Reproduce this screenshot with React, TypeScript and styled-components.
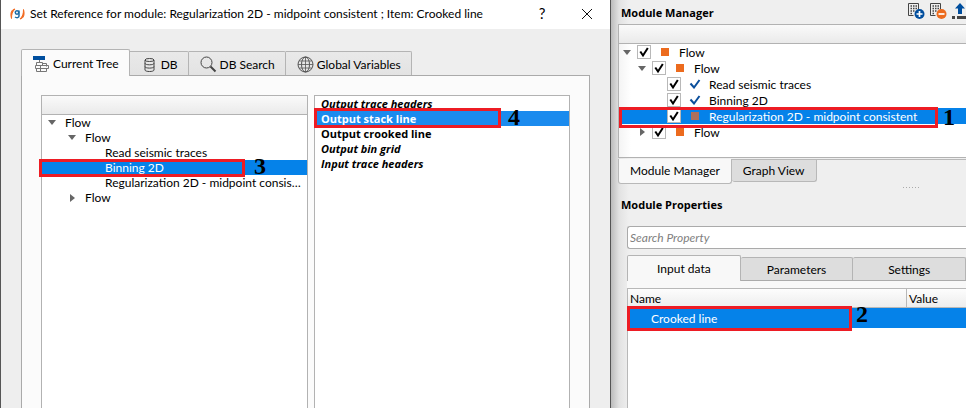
import React from "react";
import styled, { createGlobalStyle, css } from "styled-components";

const GlobalStyle = createGlobalStyle`
  *, *::before, *::after { box-sizing: border-box; }
  body {
    margin: 0;
    background: #efefef;
    color: #000;
    font: 12px/15px Lato, "Open Sans", sans-serif;
  }
  button, input { font: inherit; color: inherit; }
`;

const Screen = styled.main`
  display: grid;
  grid-template-columns: minmax(0, 611fr) minmax(0, 355fr);
  min-height: 100vh;
  overflow: hidden;
`;

/* ---------- dialog ---------- */

const Dialog = styled.section`
  display: flex;
  flex-direction: column;
  background: #eee;
  border-left: 1px solid #555;
  border-right: 1px solid #555;
`;

const TitleBar = styled.header`
  display: flex;
  align-items: center;
  height: 29px;
  padding: 0 15px 2px 9px;
  background: #fff;
`;

const Title = styled.h1`
  flex: 1;
  min-width: 0;
  margin: 0 0 0 5px;
  font-size: 12px;
  font-weight: 400;
  white-space: nowrap;
`;

const WindowButton = styled.button`
  display: flex;
  align-items: center;
  justify-content: center;
  width: 16px;
  height: 20px;
  margin-left: 29px;
  padding: 0;
  border: 0;
  background: none;
  font-size: 15px;
`;

const DialogTabs = styled.div`
  display: flex;
  align-items: flex-end;
  margin: 20px 20px 0;
  position: relative;
`;

const DialogTab = styled.button<{ $active?: boolean }>`
  display: flex;
  align-items: center;
  gap: 3px;
  height: 24px;
  padding: 2px 10px 0 11px;
  border: 1px solid #b4b4b4;
  border-left-width: 0;
  border-bottom: 0;
  border-radius: 0 2px 0 0;
  background: linear-gradient(#e9e9e9, #e3e3e3);
  white-space: nowrap;
  ${(p) =>
    p.$active &&
    css`
      height: 27px;
      margin-bottom: -1px;
      padding: 1px 10px 0 11px;
      border-left-width: 1px;
      border-radius: 2px 2px 0 0;
      background: #fbfbfb;
    `}
`;

const DialogPane = styled.div`
  flex: 1;
  display: grid;
  grid-template-columns: minmax(0, 267fr) minmax(0, 256fr);
  gap: 6px;
  margin: 0 20px;
  padding: 19px 19px 0;
  border: 1px solid #aaa;
  border-bottom: 0;
  background: #fbfbfb;
`;

const Box = styled.div`
  min-width: 0;
  border: 1px solid #b2b2b2;
  border-bottom: 0;
  background: #fff;
`;

const HeaderStrip = styled.div`
  height: 19px;
  border-bottom: 1px solid #b2b2b2;
  background: linear-gradient(#fafafa, #eaeaea);
`;

const Tree = styled.ul`
  margin: 0;
  padding: 0;
  list-style: none;
`;

const TreeRow = styled.li<{ $level: number; $selected?: boolean }>`
  position: relative;
  display: flex;
  align-items: center;
  gap: 9px;
  height: 15px;
  padding: 0 4px 0 ${(p) => 6 + p.$level * 20}px;
  white-space: nowrap;
  ${(p) => p.$selected && css`background: #0582e9; color: #fff;`}
`;

const Ellipsis = styled.span`
  min-width: 0;
  overflow: hidden;
  text-overflow: ellipsis;
`;

const ArrowSlot = styled.span`
  display: flex;
  flex: none;
  justify-content: center;
  width: 8px;
`;

const OutputRow = styled.li<{ $italic?: boolean; $selected?: boolean }>`
  position: relative;
  height: 15px;
  padding-left: 6px;
  font-family: "Open Sans", sans-serif;
  font-size: 11px;
  font-weight: 700;
  font-style: ${(p) => (p.$italic ? "italic" : "normal")};
  white-space: nowrap;
  ${(p) => p.$selected && css`background: #1b8bee; color: #fff;`}
`;

/* ---------- callouts drawn over rows ---------- */

const Frame = styled.span<{ $left: number; $width: number; $top?: number; $bottom?: number }>`
  position: absolute;
  z-index: 2;
  left: ${(p) => p.$left}px;
  top: ${(p) => p.$top ?? -1}px;
  bottom: ${(p) => p.$bottom ?? -2}px;
  width: ${(p) => p.$width}px;
  border: 3px solid #ed1c24;
  pointer-events: none;
`;

const Mark = styled.span<{ $left: number; $top?: number }>`
  position: absolute;
  z-index: 3;
  left: ${(p) => p.$left}px;
  top: ${(p) => p.$top ?? -7}px;
  color: #000;
  font: 700 24px/27px "Liberation Serif", serif;
`;

/* ---------- side panel ---------- */

const Side = styled.section`
  display: flex;
  flex-direction: column;
  min-width: 0;
  padding-left: 7px;
  background: linear-gradient(90deg, #bcbcbc, #e2e2e2 8px, #efefef 18px);
`;

const SideHeader = styled.header`
  display: flex;
  align-items: center;
  justify-content: space-between;
  height: 24px;
  padding-left: 3px;
`;

const SideTitle = styled.h2`
  margin: 0;
  font-family: "Open Sans", sans-serif;
  font-size: 11px;
  font-weight: 700;
`;

const Tools = styled.div`
  display: flex;
  gap: 4px;
  margin-right: -4px;
  padding-bottom: 2px;
`;

const ToolButton = styled.button`
  display: flex;
  width: 18px;
  padding: 0;
  border: 0;
  background: none;
`;

const ModuleBox = styled.div`
  height: 134px;
  border: 1px solid #b2b2b2;
  border-right: 0;
  background: linear-gradient(90deg, #f4f4f4, #fff 12px);
`;

const ModuleRow = styled.li<{ $level: number; $selected?: boolean }>`
  position: relative;
  display: flex;
  align-items: center;
  height: 16px;
  padding-left: ${(p) => 4 + p.$level * 15}px;
  white-space: nowrap;
  ${(p) => p.$selected && css`background: #0582e9; color: #fff;`}
`;

const ModuleLabel = styled.label`
  display: flex;
  align-items: center;
  margin-left: 6px;
`;

const tick = encodeURIComponent(
  '<svg xmlns="http://www.w3.org/2000/svg" viewBox="0 0 12 12"><path d="M2.3 5.5 5 9.5 9.8 2" fill="none" stroke="black" stroke-width="2"/></svg>'
);

const Check = styled.input`
  appearance: none;
  width: 14px;
  height: 14px;
  margin: 0;
  border: 1px solid #b8b8b8;
  background: #fff;
  &:checked { background: #fff url("data:image/svg+xml,${tick}") center / 12px 12px no-repeat; }
`;

const Status = styled.span`
  display: flex;
  justify-content: center;
  width: 12px;
  margin: 0 8px;
`;

const Square = styled.span<{ $dim?: boolean }>`
  width: 8px;
  height: 8px;
  background: ${(p) => (p.$dim ? "#ad705b" : "#ec6b1e")};
`;

const BottomTabs = styled.div`
  display: flex;
  align-items: flex-start;
  margin-top: 1px;
  border-top: 1px solid #b8b8b8;
`;

const BottomTab = styled.button<{ $active?: boolean }>`
  height: ${(p) => (p.$active ? 25 : 22)}px;
  padding: 0 11px 1px;
  border: 1px solid #b8b8b8;
  border-top: 0;
  border-left-width: ${(p) => (p.$active ? 1 : 0)}px;
  border-radius: 0 0 3px 3px;
  background: ${(p) => (p.$active ? "#f8f8f8" : "#ddd")};
  margin-top: ${(p) => (p.$active ? -1 : 0)}px;
  white-space: nowrap;
`;

const Grip = styled.div`
  width: 17px;
  height: 1px;
  margin: 3px 0 0 285px;
  background: repeating-linear-gradient(90deg, #aaa 0 1px, transparent 1px 3px);
`;

const Properties = styled.div`
  display: flex;
  flex: 1;
  flex-direction: column;
  padding: 9px 0 0 9px;
`;

const PropertiesTitle = styled(SideTitle)`
  margin-left: -6px;
`;

const Search = styled.input`
  width: 100%;
  height: 23px;
  margin-top: 14px;
  padding: 0 2px;
  border: 1px solid #aaa;
  border-right: 0;
  border-radius: 3px 0 0 3px;
  background: #fff;
  &::placeholder { color: #808080; font-style: italic; opacity: 1; }
`;

const PropertyTabs = styled.div`
  display: flex;
  align-items: flex-end;
  margin-top: 6px;
  border-bottom: 1px solid #aaa;
`;

const PropertyTab = styled.button<{ $active?: boolean }>`
  flex: 1;
  height: ${(p) => (p.$active ? 26 : 23)}px;
  margin-bottom: ${(p) => (p.$active ? -1 : 0)}px;
  padding: 0;
  border: 1px solid #b4b4b4;
  border-bottom: 0;
  border-left-width: ${(p) => (p.$active ? 1 : 0)}px;
  border-radius: 2px 2px 0 0;
  background: ${(p) => (p.$active ? "#f8f8f8" : "#ddd")};
`;

const TableBox = styled.div`
  flex: 1;
  padding-top: 7px;
  background: linear-gradient(#f8f8f8 0 7px, #fff 7px);
`;

const Table = styled.table`
  width: 100%;
  border-collapse: separate;
  border-spacing: 0;
  table-layout: fixed;
`;

const Head = styled.th`
  height: 20px;
  padding: 0 2px;
  border: solid #b8b8b8;
  border-width: 1px 0 1px 1px;
  background: linear-gradient(#fdfdfd, #ededed);
  font-weight: 400;
  text-align: left;
  &:first-child { width: 279px; }
`;

const Cell = styled.td`
  position: relative;
  height: 20px;
  padding: 0 0 0 23px;
  border-left: 1px solid #b8b8b8;
  background: #0582e9;
  color: #fff;
  & + & { border-left: 0; }
`;

const EmptyArea = styled.div`
  height: calc(100% - 40px);
  border-left: 1px solid #b8b8b8;
`;

/* ---------- drawings ---------- */

const Arrow = ({ open }: { open?: boolean }) => (
  <ArrowSlot>
    {open ? (
      <svg width="8" height="5" viewBox="0 0 8 5"><path d="M0 0h8L4 5z" fill="#666" /></svg>
    ) : (
      <svg width="5" height="8" viewBox="0 0 5 8"><path d="M0 0v8l5-4z" fill="#666" /></svg>
    )}
  </ArrowSlot>
);

const Logo = () => (
  <svg width="15" height="12" viewBox="0 0 15 12" fill="none">
    <path d="M5 1C1.500 1.500 0 5 1.500 10.500 1.500 6.500 2.200 3.500 5 1Z" fill="#f26a21" stroke="#f26a21" />
    <path d="M10 11c3.500-.5 5-4 3.500-9.500 0 4-.7 7-3.500 9.500Z" fill="#f26a21" stroke="#f26a21" />
    <circle cx="7" cy="4.500" r="1.700" stroke="#1c6ba5" strokeWidth="1.500" />
    <path d="M9 2.500v5.500c0 2-2.500 2-4 1" stroke="#1c6ba5" strokeWidth="1.500" />
  </svg>
);

const TreeIcon = () => (
  <svg width="17" height="16" viewBox="0 0 17 16" fill="none" stroke="#777">
    <path d="M0 0h12v4H0z" fill="#004e9e" stroke="none" />
    <path d="M6.500 4v2M3.500 6.500h6v3h-6zM9.500 7.500h4v3M2.500 9.500h13v3h-13zM3.500 12.500v3h10v-3M7.500 9.500v6" />
  </svg>
);

const DatabaseIcon = () => (
  <svg width="17" height="16" viewBox="0 0 17 16" fill="none" stroke="#444">
    <ellipse cx="8.500" cy="3" rx="4.500" ry="1.500" />
    <path d="M4 3v10c0 2 9 2 9 0V3M4 6.300c0 2 9 2 9 0M4 9.600c0 2 9 2 9 0" />
  </svg>
);

const SearchIcon = () => (
  <svg width="17" height="17" viewBox="0 0 17 17" fill="none" stroke="#444">
    <circle cx="6.500" cy="6.500" r="5.500" />
    <path d="m10.500 10.500 5 5" strokeWidth="2" />
  </svg>
);

const GlobeIcon = () => (
  <svg width="17" height="17" viewBox="0 0 17 17" fill="none" stroke="#555">
    <circle cx="8.500" cy="8.500" r="7.500" />
    <ellipse cx="8.500" cy="8.500" rx="4" ry="7.500" />
    <path d="M2 5h13M1 8.500h15M2 12h13M8.500 1v15" strokeWidth=".8" />
  </svg>
);

const FlowIcon = ({ kind }: { kind: "add" | "remove" }) => (
  <svg width="18" height="17" viewBox="0 0 18 17" fill="none">
    <path d="M.5 12.500v-12h10v6M.5 12.500h5" stroke="#444" />
    <path d="M2.500 3h1.500m1 0h1.500m1 0h1.500M2.500 5.500h1.500m1 0h1.500m1 0h1.500M2.500 8h1.500m1 0h1.500M2.500 10.500h1.500" stroke="#444" strokeWidth="1.500" />
    <circle cx="11.500" cy="11" r="5" fill={kind === "add" ? "#004e9e" : "#ec6b1e"} />
    <path d={kind === "add" ? "M8.500 11h6M11.500 8v6" : "M8.500 11h6"} stroke="#fff" strokeWidth="1.700" />
  </svg>
);

const UploadIcon = () => (
  <svg width="18" height="17" viewBox="0 0 18 17">
    <path d="M8 0 13 5.500H10V11H6V5.500H3z" fill="#004e9e" />
    <path d="M0 13h3v3H0zM5 13h13v3H5z" fill="#444" />
  </svg>
);

const BlueTick = () => (
  <svg width="12" height="10" viewBox="0 0 12 10"><path d="m1.500 4.500 3.500 4 5.500-7.500" fill="none" stroke="#0b4f9c" strokeWidth="2" /></svg>
);

/* ---------- data ---------- */

type ModuleItem = { text: string; level: number; state: "flow" | "done" | "dim"; open?: boolean; leaf?: boolean };

const modules: ModuleItem[] = [
  { text: "Flow", level: 0, state: "flow", open: true },
  { text: "Flow", level: 1, state: "flow", open: true },
  { text: "Read seismic traces", level: 2, state: "done", leaf: true },
  { text: "Binning 2D", level: 2, state: "done", leaf: true },
  { text: "Regularization 2D - midpoint consistent", level: 2, state: "dim", leaf: true },
  { text: "Flow", level: 1, state: "flow" },
];

const outputs = [
  { text: "Output trace headers", italic: true },
  { text: "Output stack line", selected: true },
  { text: "Output crooked line" },
  { text: "Output bin grid", italic: true },
  { text: "Input trace headers", italic: true },
];

export default function App() {
  return (
    <>
      <GlobalStyle />
      <Screen>
        <Dialog>
          <TitleBar>
            <Logo />
            <Title>Set Reference for module: Regularization 2D - midpoint consistent ; Item: Crooked line</Title>
            <WindowButton aria-label="Help">?</WindowButton>
            <WindowButton aria-label="Close">
              <svg width="12" height="12" viewBox="0 0 12 12"><path d="m1 1 10 10M11 1 1 11" stroke="#111" /></svg>
            </WindowButton>
          </TitleBar>
          <DialogTabs role="tablist">
            <DialogTab role="tab" aria-selected $active><TreeIcon />Current Tree</DialogTab>
            <DialogTab role="tab"><DatabaseIcon />DB</DialogTab>
            <DialogTab role="tab"><SearchIcon />DB Search</DialogTab>
            <DialogTab role="tab"><GlobeIcon />Global Variables</DialogTab>
          </DialogTabs>
          <DialogPane>
            <Box>
              <HeaderStrip />
              <Tree>
                <TreeRow $level={0}><Arrow open />Flow</TreeRow>
                <TreeRow $level={1}><Arrow open />Flow</TreeRow>
                <TreeRow $level={2}><ArrowSlot />Read seismic traces</TreeRow>
                <TreeRow $level={2} $selected>
                  <ArrowSlot />Binning 2D
                  <Frame $left={-3} $width={206} />
                  <Mark $left={212}>3</Mark>
                </TreeRow>
                <TreeRow $level={2}><ArrowSlot /><Ellipsis>Regularization 2D - midpoint consistent</Ellipsis></TreeRow>
                <TreeRow $level={1}><Arrow />Flow</TreeRow>
              </Tree>
            </Box>
            <Box>
              <Tree>
                {outputs.map((o) => (
                  <OutputRow key={o.text} $italic={o.italic} $selected={o.selected}>
                    {o.text}
                    {o.selected && (<><Frame $left={-1} $width={187} $top={-3} /><Mark $left={193}>4</Mark></>)}
                  </OutputRow>
                ))}
              </Tree>
            </Box>
          </DialogPane>
        </Dialog>

        <Side>
          <SideHeader>
            <SideTitle>Module Manager</SideTitle>
            <Tools>
              <ToolButton aria-label="Add flow"><FlowIcon kind="add" /></ToolButton>
              <ToolButton aria-label="Remove flow"><FlowIcon kind="remove" /></ToolButton>
              <ToolButton aria-label="Move up"><UploadIcon /></ToolButton>
            </Tools>
          </SideHeader>
          <ModuleBox>
            <HeaderStrip />
            <Tree>
              {modules.map((m, i) => (
                <ModuleRow key={i} $level={m.level} $selected={m.state === "dim"}>
                  {m.leaf ? <ArrowSlot /> : <Arrow open={m.open} />}
                  <ModuleLabel>
                    <Check type="checkbox" defaultChecked />
                    <Status>{m.state === "done" ? <BlueTick /> : <Square $dim={m.state === "dim"} />}</Status>
                    {m.text}
                  </ModuleLabel>
                  {m.state === "dim" && (<><Frame $left={0} $width={319} $bottom={-4} /><Mark $left={324} $top={-4}>1</Mark></>)}
                </ModuleRow>
              ))}
            </Tree>
          </ModuleBox>
          <BottomTabs role="tablist">
            <BottomTab role="tab" aria-selected $active>Module Manager</BottomTab>
            <BottomTab role="tab">Graph View</BottomTab>
          </BottomTabs>
          <Grip />
          <Properties>
            <PropertiesTitle>Module Properties</PropertiesTitle>
            <Search type="text" placeholder="Search Property" aria-label="Search Property" />
            <PropertyTabs role="tablist">
              <PropertyTab role="tab" aria-selected $active>Input data</PropertyTab>
              <PropertyTab role="tab">Parameters</PropertyTab>
              <PropertyTab role="tab">Settings</PropertyTab>
            </PropertyTabs>
            <TableBox>
              <Table>
                <thead><tr><Head>Name</Head><Head>Value</Head></tr></thead>
                <tbody>
                  <tr>
                    <Cell>Crooked line<Frame $left={-1} $width={225} $top={-2} $bottom={-3} /><Mark $left={228}>2</Mark></Cell>
                    <Cell />
                  </tr>
                </tbody>
              </Table>
              <EmptyArea />
            </TableBox>
          </Properties>
        </Side>
      </Screen>
    </>
  );
}
